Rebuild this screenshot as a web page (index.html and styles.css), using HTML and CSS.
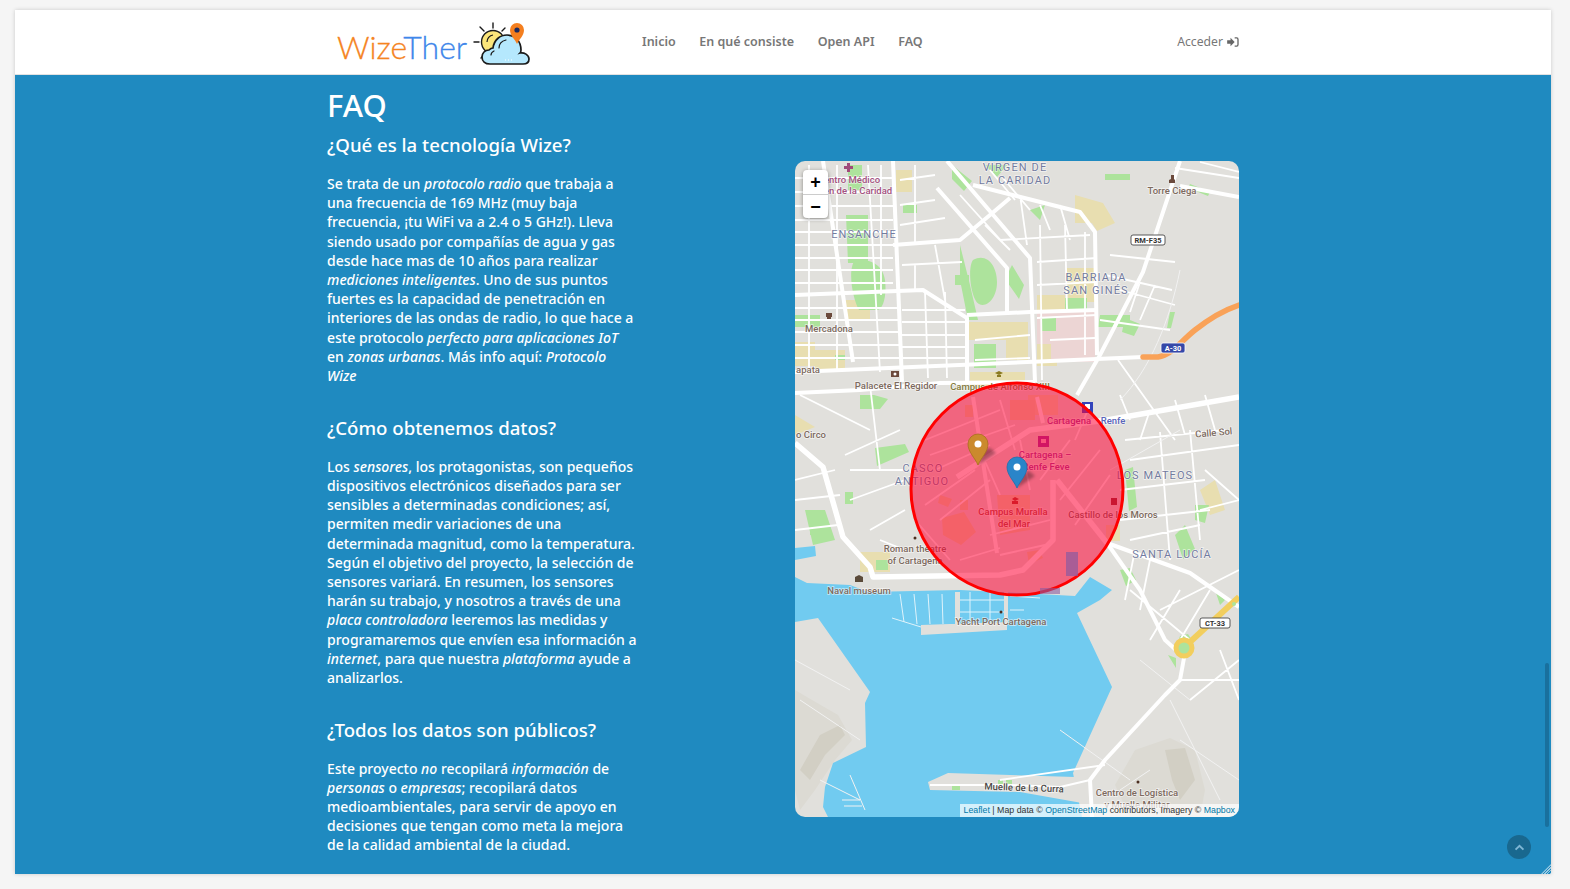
FILE: index.html
```html
<!DOCTYPE html>
<html lang="en">
<head>
    <meta charset="UTF-8">
    <meta name="viewport" content="width=device-width, initial-scale=1.0">
    <title>WizeTher</title>
    <link rel="stylesheet" href="styles.css">
</head>
<body>
    <div class="frame">
        <header class="topbar">
            <div class="container topbar-inner">
                <a class="logo" href="#">
                    <span class="logo-text"><span class="logo-orange">Wize</span><span class="logo-blue">Ther</span></span>
                    <svg class="logo-icon" viewBox="0 0 64 46" width="64" height="46">
                        <g stroke="#1a1a1a" stroke-width="1.4" stroke-linecap="round" fill="none">
                            <path d="M20 2v5M7 6l4 4M1 21h5M8 37l3-3M32 7l-3 3"/>
                        </g>
                        <circle cx="20" cy="21" r="11.5" fill="#fbe57a" stroke="#1a1a1a" stroke-width="1.4"/>
                        <path d="M14 21a7 7 0 0 1 6-7" fill="none" stroke="#1a1a1a" stroke-width="1.2"/>
                        <path d="M17 43c-5 0-8-3-8-7s3-7 7-7c1-1 2-2 4-2 1-8 7-13 14-13 9 0 14 7 14 15 0 1 0 2-1 3 4-1 9 2 9 6s-3 5-6 5z" fill="#b5e8fd" stroke="#1a1a1a" stroke-width="1.7"/>
                        <path d="M26 27c0-4 3-7 7-8M18 34c0-2 1-3 3-4" fill="none" stroke="#1a1a1a" stroke-width="1.2" stroke-linecap="round"/>
                        <path d="M32 39h1M35 39h1M38 39h1" stroke="#fff" stroke-width="1.2"/>
                        <path d="M44 23c-2-5-7-8-7-14a7 7 0 0 1 14 0c0 6-5 9-7 14z" fill="#f47f1f"/>
                        <circle cx="44" cy="9" r="2.6" fill="#1c2a5e"/>
                    </svg>
                </a>
                <nav class="main-nav">
                    <a href="#">Inicio</a>
                    <a href="#">En qué consiste</a>
                    <a href="#">Open API</a>
                    <a href="#">FAQ</a>
                </nav>
                <a class="login" href="#">Acceder
                    <svg viewBox="0 0 14 12" width="12" height="10">
                        <path d="M0 4h4V1l5 5-5 5V8H0z" fill="#666"/>
                        <path d="M9 1h2.5Q13 1 13 3v6q0 2-1.500 2H9" fill="none" stroke="#666" stroke-width="1.600"/>
                    </svg>
                </a>
            </div>
        </header>

        <main class="content">
            <div class="container columns">
                <section class="faq">
                    <h1>FAQ</h1>
                    <h3>¿Qué es la tecnología Wize?</h3>
                    <p>Se trata de un <em>protocolo radio</em> que trabaja a<br>una frecuencia de 169 MHz (muy baja<br>frecuencia, ¡tu WiFi va a 2.4 o 5 GHz!). Lleva<br>siendo usado por compañías de agua y gas<br>desde hace mas de 10 años para realizar<br><em>mediciones inteligentes</em>. Uno de sus puntos<br>fuertes es la capacidad de penetración en<br>interiores de las ondas de radio, lo que hace a<br>este protocolo <em>perfecto para aplicaciones IoT</em><br>en <em>zonas urbanas</em>. Más info aquí: <em>Protocolo<br>Wize</em></p>
                    <h3>¿Cómo obtenemos datos?</h3>
                    <p>Los <em>sensores</em>, los protagonistas, son pequeños<br>dispositivos electrónicos diseñados para ser<br>sensibles a determinadas condiciones; así,<br>permiten medir variaciones de una<br>determinada magnitud, como la temperatura.<br>Según el objetivo del proyecto, la selección de<br>sensores variará. En resumen, los sensores<br>harán su trabajo, y nosotros a través de una<br><em>placa controladora</em> leeremos las medidas y<br>programaremos que envíen esa información a<br><em>internet</em>, para que nuestra <em>plataforma</em> ayude a<br>analizarlos.</p>
                    <h3>¿Todos los datos son públicos?</h3>
                    <p>Este proyecto <em>no</em> recopilará <em>información</em> de<br><em>personas</em> o <em>empresas</em>; recopilará datos<br>medioambientales, para servir de apoyo en<br>decisiones que tengan como meta la mejora<br>de la calidad ambiental de la ciudad.</p>
                </section>

                <div class="map">
                    <svg class="map-svg" viewBox="795 161 444 656" width="444" height="656">
                        <rect x="795" y="161" width="444" height="656" fill="#e1e0dc"/>

                        <!-- hills -->
                        <path class="hill" d="M795 690L812 700L838 715L852 740L835 760L815 790L800 810L795 790Z"/>
                        <path class="hill-dark" d="M800 770L820 735L840 725L845 735L825 755L810 780Z"/>
                        <path class="hill" d="M1135 750L1170 738L1195 750L1205 790L1200 817H1130L1115 785Z"/>
                        <path class="hill-dark" d="M1165 750L1185 748L1195 780L1180 800L1172 780Z"/>

                        <!-- water -->
                        <path class="water" d="M795 577L807 583L850 585L868 592L960 590L1000 592L1075 596L1090 577L1112 590L1100 600L1077 613L1112 687L1073 773L1082 817H828L823 807L825 787L833 763L866 747L865 703L870 692L818 618L795 622Z"/>
                        <path class="water" d="M795 548L815 546L816 556L795 560Z"/>
                        <path class="land" d="M921 625L1007 622V630L921 635ZM955 592H960V625H955ZM1004 592H1008V625H1004Z"/>
                        <path class="land" d="M928 782L948 773L1075 777L1082 803L1020 792L930 790Z"/>
                        <path class="pier" d="M892 618L921 627M900 594L904 622M914 594L917 624M928 594L930 624M942 594L943 624M970 592V622M990 592V622M960 600H1004M960 612H1004M1010 596L1040 598M1010 610L1024 610"/>

                        <!-- blocks -->
                        <g class="sand">
                            <path d="M896 170h16v22h-16zM1075 195l28 8 12 20-18 8-5-8h-17zM845 300h25v20h-25zM968 322h60v18h-60zM1066 268h30v34h-30zM1037 295h28v20h-28zM1037 332h20v34h-20zM1006 340h22v20h-22zM815 350h30v20h-30zM970 372h55v16h-55zM795 415l0 20 20-8zM1200 490l15-10 10 30-15 5zM860 552h30v20h-30zM795 342h20v24h-20zM1106 525h14v16h-14zM1028 395h30v20h-30z"/>
                        </g>
                        <path class="pinkarea" d="M1037 312h58v50h-44v-18h-14z"/>
                        <g class="brown">
                            <path d="M997 495h33v35l-30 5zM942 518l22-6 12 20-15 13-18-10zM1010 400h25v20h-25zM965 405h8v12h-8zM1027 552l12-2 4 8-14 6zM940 495l12 4-4 8-10-4zM960 500h8v10h-8z"/>
                        </g>
                        <g class="green">
                            <path d="M846 215h22v48h-20zM848 165h14v25h-14zM903 205h14v8h-14zM1030 210l15-5-5 15zM952 165l20 16-8 10-12-12zM985 165h22l-10 12zM960 245l10 40 8 35h-10l-8-40zM973 260c14-8 24 6 24 22s-10 26-18 22-12-36-6-44zM955 275h14v10h-14zM855 260c14-2 28 4 30 20s-2 30-8 30h-18c-6-10-12-40-4-50zM1012 265l12 20-5 14-14-20zM1065 298h22v12h-22zM1042 317h14v14h-14zM1100 315h30v12h-32zM1125 318l15 6-6 12-12-4zM795 315h25v12h-25zM974 344h22v24h-22zM835 355h10v5h-10zM1105 174h25v6h-25zM1190 184l20 8-2 4-20-8zM1170 312l5 0-4 16h-4zM875 448l30-4 4 8-32 14zM860 395h14l14 4-8 10h-20zM810 525h18v10h-18zM805 510h20l10 30-22 5zM1175 535l10-10 10 24-12 10zM1125 470l8-3 4 40-8 4zM1195 505h14l-4 18-10-3zM1120 570l10-2 6 12-10 6zM1215 590l10 10-5 5zM845 492h8v12h-8zM876 560h12v10h-12zM952 785h8v5h-8zM998 780h5v5h-5zM1006 780h6v5h-6zM1180 636l8-2 5 8-15 0zM1168 655l8 3 0 10z"/>
                        </g>

                        <!-- small streets -->
                        <path class="street" d="M809 165V372M837 165V372M868 165L880 372M881 165V295M795 178H893M795 192H893M795 206H893M795 220H893M795 232H893M795 245H893M795 258H893M795 270H893M795 283H893M795 308H900M795 320H900M795 332H900M795 345H900M795 358H900M925 292L928 378M902 310H965M902 322H965M902 335H965M902 347H965M902 358H965M945 292L947 378M900 205L935 200M900 225L945 218M902 265L962 262M935 245L945 300M900 180L935 175M915 165V245M915 265V290M960 195L1005 245M985 225L1010 250M990 170L1015 200M1020 195L1027 245M1003 178L1030 210M1040 205L1050 230M1060 205L1070 240M1000 240L1090 235M1037 262L1097 258M1040 225L1042 380M1065 225L1067 310M1085 232V355M1037 285L1097 282M1037 318L1097 315M1110 255L1175 262M1105 275L1172 290M1120 290L1175 305M1100 320L1170 330M1140 282L1130 312M1155 285L1140 320M1175 168L1239 178M1200 162L1239 172M975 340L1030 335M975 360L1030 358M1050 340L1095 338M1118 360L1175 440M800 395L870 430M870 385L880 470M795 480L835 470M795 500L840 495M795 530L838 525M845 455L900 430M850 470L905 470M850 500L905 480M870 530L905 510M880 540L905 550M1125 440L1225 430M1130 460L1239 445M1120 490L1205 480M1120 520L1210 510M1130 540L1200 525M1190 430L1200 540M1160 432L1170 560M1135 550L1125 600M1150 560L1140 610M1205 470L1239 500M1200 510L1239 500M1180 590L1150 640M1210 590L1180 640M1160 610L1239 570M1130 590L1190 640M1220 650L1239 700M1190 700L1239 660M1180 680L1239 680M1000 780L1105 765M925 440L1000 410M930 455L1015 425M935 470L990 445M925 505L975 470M940 520L990 480M1000 400L1015 450M1020 440L1030 490M1040 480L1070 440M1060 500L1100 450M1075 525L1110 475M990 535L1050 520M1000 555L1045 545M960 560L1000 548M1090 405L1075 440M980 450L1000 495M915 520L950 560M1130 420L1120 395M1150 410L1140 440M1175 400L1185 435M1205 395L1215 430"/>
                        <path class="street-thin" d="M795 660L850 690M800 700L860 740M1140 660L1190 700M1170 700L1220 800M1180 740L1239 780M1060 730L1130 780M1120 790L1150 770M820 780L860 800M842 800H860M844 806H862M850 775L865 810M1180 270C1170 320 1150 370 1120 400M1110 470L1180 430"/>

                        <!-- main roads -->
                        <g class="road">
                            <path d="M947 161L1030 258L1035 382"/>
                            <path d="M795 372L1143 357"/>
                            <path d="M893 161L902 382"/>
                            <path d="M795 295L923 290L967 318V382"/>
                            <path d="M893 245L960 240L990 215L1010 198"/>
                            <path d="M937 188L1007 268V312"/>
                            <path d="M967 315L1030 312L1097 310"/>
                            <path d="M1180 161L1143 272L1100 355L1077 395"/>
                            <path d="M973 185L1080 212L1095 232L1097 355"/>
                            <path d="M823 161L853 362"/>
                            <path d="M795 393L860 390L940 383L1035 382"/>
                            <path d="M1180 186L1239 197"/>
                            <path d="M973 397L997 553"/>
                            <path d="M1037 397L1043 423"/>
                            <path d="M1107 543L1190 573L1239 607"/>
                            <path d="M1184 658L1180 680L1165 695L1105 760L1090 780L1092 817"/>
                            <path d="M1107 543L1140 590L1165 640L1176 650"/>
                        </g>
                        <g class="road road-wide">
                            <path d="M957 477L1030 430L1107 420L1239 397"/>
                            <path d="M795 443L823 467L843 537L870 567L873 577L1000 575L1023 570L1053 540L1053 480"/>
                            <path d="M1057 480L1107 543"/>
                        </g>
                        <path class="road-thin" d="M930 785H1010L1060 787L1090 780"/>
                        <path class="highway" d="M1143 357H1158C1172 355 1180 342 1195 330C1210 318 1224 310 1239 305"/>
                        <path class="yellow-road" d="M1190 642L1239 597"/>
                        <circle class="roundabout" cx="1184" cy="648" r="8"/>
                        <circle class="park-dot" cx="1234" cy="604" r="2"/>

                        <!-- labels -->
                        <g class="hood">
                            <text x="1015" y="171">VIRGEN DE</text>
                            <text x="1015" y="184">LA CARIDAD</text>
                            <text x="864" y="238">ENSANCHE</text>
                            <text x="1096" y="281">BARRIADA</text>
                            <text x="1096" y="294">SAN GINÉS</text>
                            <text x="923" y="472">CASCO</text>
                            <text x="922" y="485">ANTIGUO</text>
                            <text x="1155" y="479">LOS MATEOS</text>
                            <text x="1172" y="558">SANTA LUCÍA</text>
                        </g>
                        <g class="poi">
                            <text x="1172" y="194">Torre Ciega</text>
                            <text x="829" y="332">Mercadona</text>
                            <text x="808" y="373">apata</text>
                            <text x="896" y="389">Palacete El Regidor</text>
                            <text x="811" y="438">o Circo</text>
                            <text x="1214" y="436" transform="rotate(-5 1214 436)">Calle Sol</text>
                            <text x="1113" y="518">Castillo de los Moros</text>
                            <text x="915" y="552">Roman theatre</text>
                            <text x="915" y="564">of Cartagena</text>
                            <text x="859" y="594">Naval museum</text>
                            <text x="1001" y="625">Yacht Port Cartagena</text>
                            <text x="1024" y="791" class="poi-dark" transform="rotate(2 1024 791)">Muelle de La Curra</text>
                            <text x="1137" y="796">Centro de Logística</text>
                            <text x="1137" y="808">y Muelle Militar</text>
                        </g>
                        <g class="poi poi-hospital">
                            <text x="852" y="183">entro Médico</text>
                            <text x="858" y="194">en de la Caridad</text>
                        </g>
                        <text class="poi poi-campus" x="1000" y="390">Campus de Alfonso XIII</text>
                        <g class="poi poi-campus-red">
                            <text x="1013" y="515">Campus Muralla</text>
                            <text x="1014" y="527">del Mar</text>
                        </g>
                        <g class="poi poi-rail">
                            <text x="1069" y="424">Cartagena</text>
                            <text x="1045" y="458">Cartagena –</text>
                            <text x="1046" y="470">Renfe Feve</text>
                        </g>
                        <text class="poi poi-renfe" x="1113" y="424">Renfe</text>

                        <!-- shields -->
                        <g class="shield">
                            <rect x="1131" y="235" width="34" height="10" rx="2"/>
                            <text x="1148" y="243">RM-F35</text>
                            <rect x="1200" y="618" width="30" height="10" rx="2"/>
                            <text x="1215" y="626">CT-33</text>
                        </g>
                        <g class="shield shield-blue">
                            <rect x="1161" y="343" width="24" height="10" rx="2"/>
                            <text x="1173" y="351">A-30</text>
                        </g>

                        <!-- poi icons -->
                        <path d="M1169 183h6v-3l-1-1v-4h-3v4l-2 1z" fill="#6b4a3c"/>
                        <path d="M826 313h6v4h-1v2h-4v-2h-1z" fill="#6b4a3c"/>
                        <path d="M891 371h8v6h-8z" fill="#6b4a3c"/>
                        <circle cx="895" cy="374" r="1.500" fill="#fff"/>
                        <path d="M995 373l4-2 4 2-4 2zM997 375v2h4v-2z" fill="#8a7a20"/>
                        <path d="M1012 499l3-2 4 2-4 2zM1012 501v3h6v-3z" fill="#b03a20"/>
                        <path d="M1111 498h6v7h-6z" fill="#8b3030"/>
                        <path d="M855 577l4-2 4 2v5h-8z" fill="#5a4a3a"/>
                        <circle cx="915" cy="538" r="1.500" fill="#4a2e20"/>
                        <circle cx="1001" cy="612" r="1.500" fill="#4a2e20"/>
                        <circle cx="1138" cy="782" r="1.500" fill="#4a2e20"/>
                        <path d="M847 163h3v3h3v3h-3v3h-3v-3h-3v-3h3z" fill="#a04a7a"/>
                        <rect x="1082" y="402" width="11" height="11" fill="#3344bb"/>
                        <rect x="1085" y="404" width="5" height="5" fill="#fff"/>
                        <rect x="1038" y="436" width="11" height="11" fill="#9b2f9e"/>
                        <rect x="1041" y="439" width="5" height="4" fill="#f3b5d8"/>

                        <!-- radius -->
                        <circle class="radius" cx="1017" cy="489" r="106"/>
                        <rect x="1066" y="552" width="12" height="24" fill="#8a5aa0" opacity=".7"/>
                        <rect x="1040" y="588" width="20" height="6" fill="#8a5aa0" opacity=".6"/>

                        <!-- pins -->
                        <g class="pin-shadow">
                            <path d="M978 465L996 453L990 448L983 450Z"/>
                            <path d="M1017 488L1035 476L1029 471L1022 473Z"/>
                        </g>
                        <path class="pin pin-orange" d="M978 465C975 458 968 452 968 444A10 10 0 0 1 988 444C988 452 981 458 978 465Z"/>
                        <circle class="pin-dot" cx="978" cy="444" r="3.500"/>
                        <path class="pin pin-blue" d="M1017 488C1014 481 1007 475 1007 467A10 10 0 0 1 1027 467C1027 475 1020 481 1017 488Z"/>
                        <circle class="pin-dot" cx="1017" cy="467" r="3.500"/>
                    </svg>

                    <div class="zoom-control">
                        <a href="#">+</a>
                        <a href="#">−</a>
                    </div>
                    <div class="attribution"><a href="#">Leaflet</a> | Map data © <a href="#">OpenStreetMap</a> contributors, Imagery © <a href="#">Mapbox</a></div>
                </div>
            </div>
        </main>

        <div class="scroll-thumb"></div>
        <a class="to-top" href="#">
            <svg viewBox="0 0 12 8" width="11" height="7"><path d="M1.500 6.500L6 2l4.500 4.500" fill="none" stroke="#7fb6d4" stroke-width="2.200"/></svg>
        </a>
        <div class="resize-grip"></div>
    </div>
</body>
</html>
```

FILE: styles.css
```css
html, body {
    height: 100%;
    margin: 0;
    overflow: hidden;
}

body {
    background-color: #f5f5f5;
    padding: 10px 19px 15px 15px;
    box-sizing: border-box;
    font-family: "Noto Sans", Arial, sans-serif;
}

a {
    text-decoration: none;
}

.frame {
    position: relative;
    height: 100%;
    display: flex;
    flex-direction: column;
    overflow: hidden;
    background-color: #1f8ac0;
    box-shadow: 0 0 4px rgba(0, 0, 0, 0.18);
}

.container {
    width: 940px;
    margin: 0 auto;
    padding: 0 14px;
    box-sizing: border-box;
}

.topbar {
    height: 65px;
    flex-shrink: 0;
    background-color: #fff;
    border-bottom: 1px solid #e2e2e2;
    box-sizing: border-box;
}

.topbar-inner {
    display: flex;
    align-items: center;
    height: 100%;
}

.logo {
    display: flex;
    align-items: center;
    width: 305px;
    margin-left: 10px;
    margin-top: 3px;
}

.logo-text {
    font-family: Lato, sans-serif;
    font-weight: 300;
    font-size: 32px;
    line-height: 40px;
    margin-top: 6px;
    -webkit-text-stroke: 0.3px currentColor;
}

.logo-orange {
    color: #f5841f;
}

.logo-blue {
    color: #3f87ea;
}

.logo-icon {
    margin-left: 6px;
}

.main-nav {
    display: flex;
    gap: 23.600px;
    margin-top: -1px;
}

.main-nav a {
    font-size: 12.500px;
    font-weight: 600;
    color: #777;
}

.login {
    display: flex;
    align-items: center;
    gap: 4px;
    margin-left: auto;
    margin-top: -1px;
    font-size: 12.200px;
    color: #777;
}

.content {
    flex: 1;
    overflow: hidden;
}

.columns {
    display: flex;
    justify-content: space-between;
    align-items: flex-start;
}

.faq {
    width: 320px;
    flex-shrink: 0;
    color: #fff;
    font-size: 14px;
    line-height: 19.200px;
    font-weight: 500;
}

.faq h1 {
    margin: 10px 0 0;
    font-size: 31px;
    line-height: 40px;
    font-weight: 500;
}

.faq h3 {
    margin: 7px 0 16px;
    font-size: 18.600px;
    line-height: 26px;
    font-weight: 500;
}

.faq p {
    margin: 0 0 29.500px;
    white-space: nowrap;
}

.faq p + h3 {
    margin-top: 0;
}

.map {
    position: relative;
    width: 444px;
    height: 656px;
    margin-top: 86px;
    border-radius: 10px;
    overflow: hidden;
}

.map-svg {
    display: block;
}

.water {
    fill: #71cbf0;
}

.land {
    fill: #e1e0dc;
}

.hill {
    fill: #dcdad3;
}

.hill-dark {
    fill: #d2cfc4;
}

.pier {
    fill: none;
    stroke: #dff3fb;
    stroke-width: 1;
}

.sand path {
    fill: #e8deb0;
}

.pinkarea {
    fill: #ecd5d4;
}

.brown path {
    fill: #e6d8a8;
}

.green path {
    fill: #ade39c;
}

.street, .street-thin, .road, .road-thin, .highway, .yellow-road {
    fill: none;
    stroke-linejoin: round;
}

.street {
    stroke: #fff;
    stroke-width: 1.800;
}

.street-thin {
    stroke: #f2f2f2;
    stroke-width: 1;
}

.road path {
    fill: none;
    stroke: #fff;
    stroke-width: 4;
}

.road-wide path {
    stroke-width: 5.500;
}

.road-thin {
    stroke: #fff;
    stroke-width: 2;
}

.highway {
    stroke: #f9a258;
    stroke-width: 5.500;
    stroke-linecap: round;
}

.yellow-road {
    stroke: #f2ce5e;
    stroke-width: 6;
}

.roundabout {
    fill: #ade39c;
    stroke: #f2ce5e;
    stroke-width: 5;
}

.park-dot {
    fill: #ade39c;
}

.hood text {
    font-family: Roboto, sans-serif;
    font-size: 11px;
    letter-spacing: 1.100px;
    text-anchor: middle;
    fill: #737b9f;
    stroke: rgba(255, 255, 255, 0.6);
    stroke-width: 1.500px;
    paint-order: stroke;
}

.poi, .poi text {
    font-family: Roboto, sans-serif;
    font-size: 9.500px;
    font-weight: 500;
    text-anchor: middle;
    fill: #7d6a5e;
    stroke: rgba(255, 255, 255, 0.6);
    stroke-width: 1.500px;
    paint-order: stroke;
}

.poi text.poi-dark {
    fill: #4d4a48;
}

.poi-hospital text {
    fill: #a3517f;
}

.poi-campus {
    fill: #857a3c;
}

.poi-campus-red text {
    fill: #a8503f;
}

.poi-rail text {
    fill: #9a3d9a;
}

.poi-renfe {
    fill: #5a66bb;
}

.shield rect {
    fill: #fff;
    stroke: #333;
    stroke-width: 0.800;
}

.shield text {
    font-family: Roboto, sans-serif;
    font-size: 7.500px;
    font-weight: 700;
    text-anchor: middle;
    fill: #333;
}

.shield-blue rect {
    fill: #3548a8;
    stroke: #fff;
}

.shield-blue text {
    fill: #fff;
}

.radius {
    fill: #ff0033;
    fill-opacity: 0.55;
    stroke: #ff0000;
    stroke-width: 3;
}

.pin-shadow path {
    fill: rgba(0, 0, 0, 0.3);
    filter: blur(1.500px);
}

.pin {
    stroke-width: 0.800;
}

.pin-orange {
    fill: #cb8a2d;
    stroke: #a86f20;
}

.pin-blue {
    fill: #2a85c9;
    stroke: #2270ab;
}

.pin-dot {
    fill: #fff;
}

.zoom-control {
    position: absolute;
    top: 9px;
    left: 8px;
    width: 25px;
    background-color: #fff;
    border-radius: 4px;
    box-shadow: 0 1px 4px rgba(0, 0, 0, 0.4);
}

.zoom-control a {
    display: block;
    height: 24px;
    line-height: 24px;
    text-align: center;
    font-family: "Liberation Sans", Arial, sans-serif;
    font-size: 18px;
    font-weight: 700;
    color: #000;
}

.zoom-control a + a {
    height: 23px;
    border-top: 1px solid #ccc;
}

.attribution {
    position: absolute;
    right: 0;
    bottom: 0;
    padding: 0 4px 0 3px;
    height: 13px;
    line-height: 13px;
    background-color: rgba(255, 255, 255, 0.7);
    font-family: "Liberation Sans", Arial, sans-serif;
    font-size: 8.800px;
    color: #333;
    white-space: nowrap;
}

.attribution a {
    color: #0078a8;
}

.scroll-thumb {
    position: absolute;
    top: 653px;
    right: 2px;
    width: 4px;
    height: 164px;
    border-radius: 2px;
    background-color: #19709e;
}

.to-top {
    position: absolute;
    right: 20px;
    bottom: 15px;
    width: 24px;
    height: 24px;
    border-radius: 50%;
    background-color: #19688f;
    display: flex;
    align-items: center;
    justify-content: center;
}

.resize-grip {
    position: absolute;
    right: 0;
    bottom: 0;
    width: 10px;
    height: 10px;
    background-image: repeating-linear-gradient(135deg, transparent 0 1px, rgba(255, 255, 255, 0.55) 1px 2px);
    clip-path: polygon(100% 0, 100% 100%, 0 100%);
}
```
